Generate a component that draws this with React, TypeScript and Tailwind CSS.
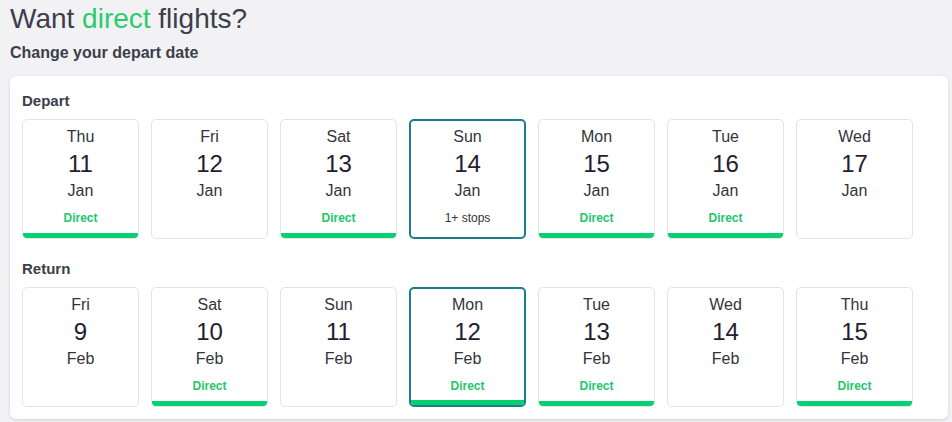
import React from "react";

type Day = { d: string; n: number; m: string; tag?: "direct" | "stops"; selected?: boolean };

const depart: Day[] = [
  { d: "Thu", n: 11, m: "Jan", tag: "direct" },
  { d: "Fri", n: 12, m: "Jan" },
  { d: "Sat", n: 13, m: "Jan", tag: "direct" },
  { d: "Sun", n: 14, m: "Jan", tag: "stops", selected: true },
  { d: "Mon", n: 15, m: "Jan", tag: "direct" },
  { d: "Tue", n: 16, m: "Jan", tag: "direct" },
  { d: "Wed", n: 17, m: "Jan" },
];

const ret: Day[] = [
  { d: "Fri", n: 9, m: "Feb" },
  { d: "Sat", n: 10, m: "Feb", tag: "direct" },
  { d: "Sun", n: 11, m: "Feb" },
  { d: "Mon", n: 12, m: "Feb", tag: "direct", selected: true },
  { d: "Tue", n: 13, m: "Feb", tag: "direct" },
  { d: "Wed", n: 14, m: "Feb" },
  { d: "Thu", n: 15, m: "Feb", tag: "direct" },
];

function Card({ day }: { day: Day }) {
  return (
    <div
      className={
        day.selected
          ? "w-[117px] h-[120px] rounded-[5px] border-2 border-[#1b7e8d] bg-white flex flex-col items-center overflow-hidden"
          : "w-[117px] h-[120px] rounded-[5px] border border-[#e3e4e8] bg-white flex flex-col items-center overflow-hidden"
      }
    >
      <div className={day.selected ? "pt-[4px]" : "pt-[5px]"} />
      <div className="text-[16px] leading-[24px] text-[#33343c]">{day.d}</div>
      <div className="text-[24px] leading-[30px] text-[#1f2030]">{day.n}</div>
      <div className="text-[16px] leading-[24px] text-[#33343c]">{day.m}</div>
      {day.tag === "direct" && (
        <div className="mt-[7px] text-[12px] leading-[16px] font-bold text-[#25c56d]">Direct</div>
      )}
      {day.tag === "stops" && (
        <div className="mt-[7px] text-[12px] leading-[16px] text-[#33343c]">1+ stops</div>
      )}
      {day.tag === "direct" && <div className="mt-auto w-full h-[5px] bg-[#08cf6f]" />}
    </div>
  );
}

export default function App() {
  return (
    <div
      className="w-[952px] h-[422px] bg-[#f2f2f4] overflow-hidden"
      style={{ fontFamily: '"Liberation Sans", Arial, sans-serif' }}
    >
      <div className="pl-[10px]">
        <h1 className="pt-[3px] text-[28px] leading-[32px] text-[#3c3e4b]">
          Want <span className="text-[#2ccb6e]">direct</span> flights?
        </h1>
        <h2 className="mt-[9px] text-[16px] leading-[18px] font-bold text-[#3c3e4b]">
          Change your depart date
        </h2>
      </div>
      <div className="ml-[10px] mt-[14px] w-[938px] rounded-[6px] bg-white shadow-[0_1px_3px_rgba(0,0,0,0.15)] pl-[12px] pt-[15px] pb-[12px]">
        <div className="text-[15px] leading-[20px] font-bold text-[#3c3e4b]">Depart</div>
        <div className="mt-[8px] flex gap-[12px]">
          {depart.map((d, i) => (
            <Card key={i} day={d} />
          ))}
        </div>
        <div className="mt-[20px] text-[15px] leading-[20px] font-bold text-[#3c3e4b]">Return</div>
        <div className="mt-[8px] flex gap-[12px]">
          {ret.map((d, i) => (
            <Card key={i} day={d} />
          ))}
        </div>
      </div>
    </div>
  );
}
